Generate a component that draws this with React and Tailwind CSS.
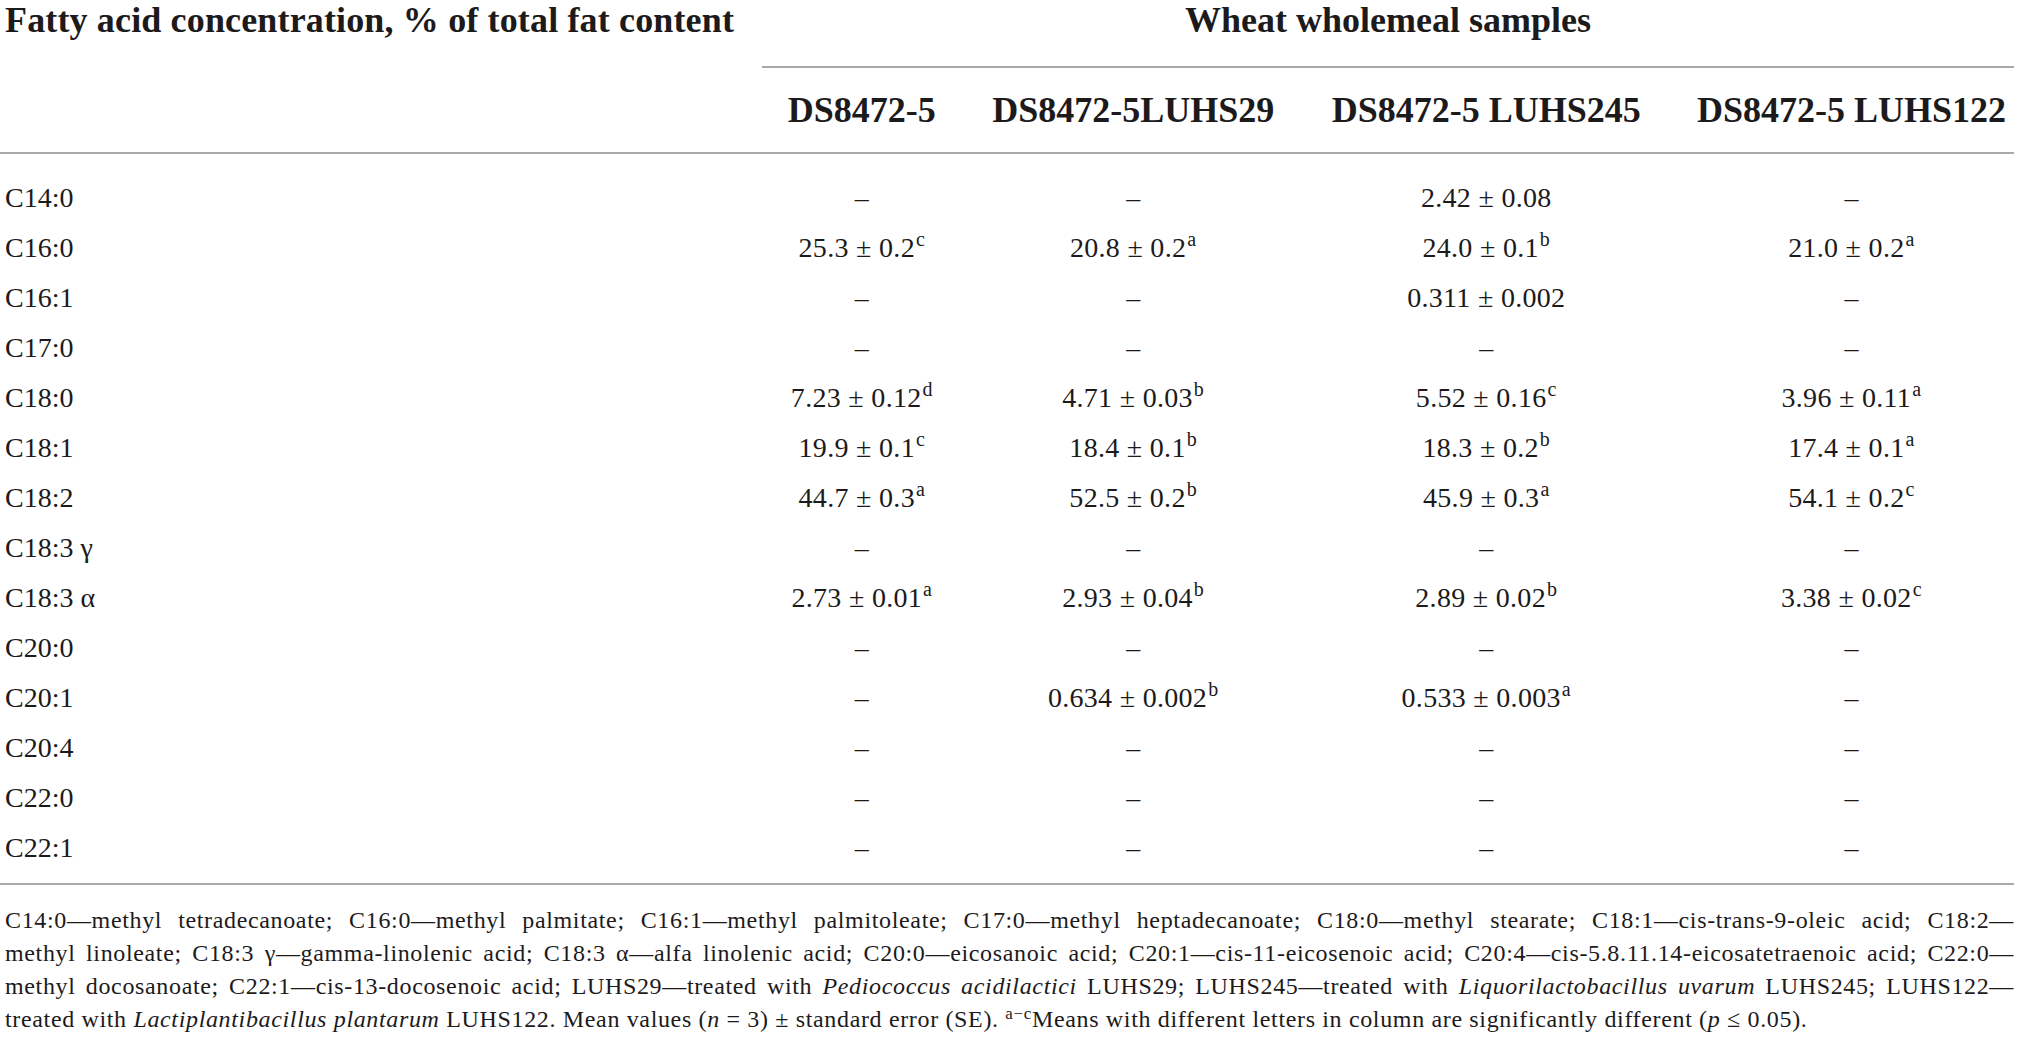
const cols = ["DS8472-5", "DS8472-5LUHS29", "DS8472-5 LUHS245", "DS8472-5 LUHS122"];

const D = "–";

const rows = [
  ["C14:0", D, D, ["2.42 ± 0.08", ""], D],
  ["C16:0", ["25.3 ± 0.2", "c"], ["20.8 ± 0.2", "a"], ["24.0 ± 0.1", "b"], ["21.0 ± 0.2", "a"]],
  ["C16:1", D, D, ["0.311 ± 0.002", ""], D],
  ["C17:0", D, D, D, D],
  ["C18:0", ["7.23 ± 0.12", "d"], ["4.71 ± 0.03", "b"], ["5.52 ± 0.16", "c"], ["3.96 ± 0.11", "a"]],
  ["C18:1", ["19.9 ± 0.1", "c"], ["18.4 ± 0.1", "b"], ["18.3 ± 0.2", "b"], ["17.4 ± 0.1", "a"]],
  ["C18:2", ["44.7 ± 0.3", "a"], ["52.5 ± 0.2", "b"], ["45.9 ± 0.3", "a"], ["54.1 ± 0.2", "c"]],
  ["C18:3 γ", D, D, D, D],
  ["C18:3 α", ["2.73 ± 0.01", "a"], ["2.93 ± 0.04", "b"], ["2.89 ± 0.02", "b"], ["3.38 ± 0.02", "c"]],
  ["C20:0", D, D, D, D],
  ["C20:1", D, ["0.634 ± 0.002", "b"], ["0.533 ± 0.003", "a"], D],
  ["C20:4", D, D, D, D],
  ["C22:0", D, D, D, D],
  ["C22:1", D, D, D, D],
];

const Cell = ({ v }) => {
  if (typeof v === "string") return <span>{v}</span>;
  return (
    <span className="tracking-[0.3px]">
      {v[0]}
      {v[1] && <sup className="text-[20px] -top-[11px] ml-[1px]">{v[1]}</sup>}
    </span>
  );
};

const colCls = [
  "w-[208px] text-center",
  "w-[336px] text-center",
  "w-[372px] text-center",
  "w-[343px] text-center pl-[17px]",
];

export default function App() {
  return (
    <div className="w-[2019px] h-[1051px] bg-white text-[#1c1a1b] font-['Liberation_Serif',serif] overflow-hidden">
      <div className="w-[2014px]">
        {/* head */}
        <div className="flex">
          <div className="w-[760px] pl-[5px] text-[36px] leading-[40px] font-bold whitespace-nowrap tracking-[0.15px]">
            Fatty acid concentration, % of total fat content
          </div>
          <div className="flex-1 flex flex-col">
            <div className="h-[66px] text-center text-[36px] leading-[40px] font-bold ml-[2px]">
              Wheat wholemeal samples
            </div>
            <div className="h-[2px] bg-[#a9a9a9] ml-[2px]" />
          </div>
        </div>
        <div className="flex pt-[22px] pb-[22px] text-[36px] leading-[40px] font-bold">
          <div className="w-[760px]" />
          {cols.map((c, i) => (
            <div key={c} className={colCls[i] + " whitespace-nowrap"}>
              {c}
            </div>
          ))}
        </div>
        <div className="h-[2px] bg-[#a9a9a9]" />

        {/* body */}
        <div className="pt-[19px] pb-[10px] text-[28px] leading-[50px]">
          {rows.map((r) => (
            <div key={r[0]} className="flex h-[50px]">
              <div className="w-[760px] pl-[5px]">{r[0]}</div>
              {r.slice(1).map((v, i) => (
                <div key={i} className={colCls[i] + " whitespace-nowrap"}>
                  <Cell v={v} />
                </div>
              ))}
            </div>
          ))}
        </div>
        <div className="h-[2px] bg-[#a9a9a9]" />

        {/* footnote */}
        <div className="pt-[19px] pl-[5px] text-[24px] leading-[33px] tracking-[0.65px]">
          <div className="text-justify [text-align-last:justify] whitespace-nowrap">
            C14:0—methyl tetradecanoate; C16:0—methyl palmitate; C16:1—methyl palmitoleate; C17:0—methyl heptadecanoate; C18:0—methyl stearate; C18:1—cis-trans-9-oleic acid; C18:2—
          </div>
          <div className="text-justify [text-align-last:justify] whitespace-nowrap">
            methyl linoleate; C18:3 γ—gamma-linolenic acid; C18:3 α—alfa linolenic acid; C20:0—eicosanoic acid; C20:1—cis-11-eicosenoic acid; C20:4—cis-5.8.11.14-eicosatetraenoic acid; C22:0—
          </div>
          <div className="text-justify [text-align-last:justify] whitespace-nowrap">
            methyl docosanoate; C22:1—cis-13-docosenoic acid; LUHS29—treated with <i>Pediococcus acidilactici</i> LUHS29; LUHS245—treated with <i>Liquorilactobacillus uvarum</i> LUHS245; LUHS122—
          </div>
          <div className="whitespace-nowrap">
            treated with <i>Lactiplantibacillus plantarum</i> LUHS122. Mean values (<i>n</i> = 3) ± standard error (SE).{" "}
            <sup className="text-[17px]">a−c</sup>Means with different letters in column are significantly different (<i>p</i> ≤ 0.05).
          </div>
        </div>
      </div>
    </div>
  );
}
